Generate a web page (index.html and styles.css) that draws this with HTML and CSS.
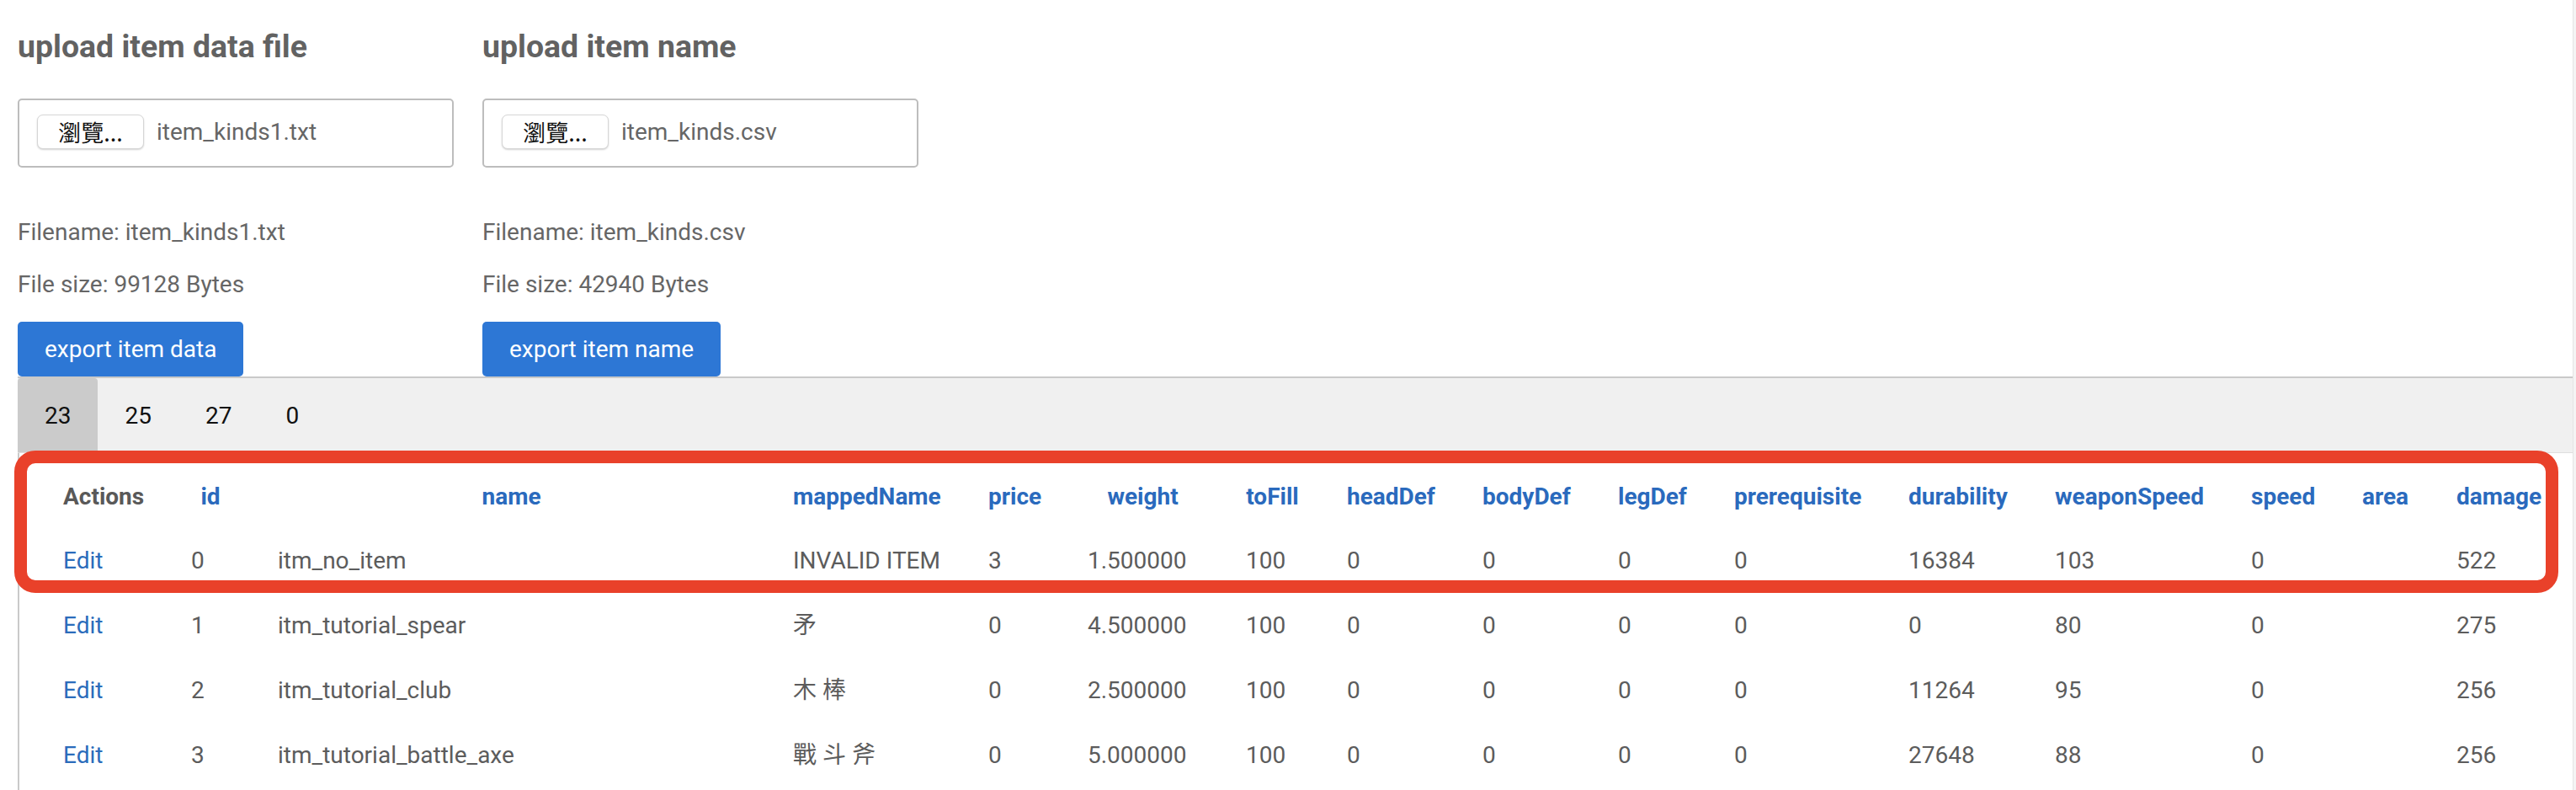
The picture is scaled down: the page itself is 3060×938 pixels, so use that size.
FILE: index.html
```html
<!DOCTYPE html>
<html lang="en">
<head>
<meta charset="utf-8">
<title>Item editor</title>
<link rel="stylesheet" href="styles.css">
</head>
<body>
<div class="page">
  <div class="uploads">
    <section class="upload">
      <h3 class="upload-title">upload item data file</h3>
      <div class="file-box"><span class="file-btn">瀏覽...</span><span class="file-name">item_kinds1.txt</span></div>
      <p class="meta meta-first">Filename: item_kinds1.txt</p>
      <p class="meta">File size: 99128 Bytes</p>
      <button class="export" type="button">export item data</button>
    </section>
    <section class="upload">
      <h3 class="upload-title">upload item name</h3>
      <div class="file-box"><span class="file-btn">瀏覽...</span><span class="file-name">item_kinds.csv</span></div>
      <p class="meta meta-first">Filename: item_kinds.csv</p>
      <p class="meta">File size: 42940 Bytes</p>
      <button class="export" type="button">export item name</button>
    </section>
  </div>
  <div class="tabbar">
    <span class="tab tab-active">23</span>
    <span class="tab">25</span>
    <span class="tab">27</span>
    <span class="tab">0</span>
  </div>
  <div class="panel">
    <table class="items">
      <thead>
        <tr>
          <th class="c-actions th-plain">Actions</th>
          <th class="c-id">id</th>
          <th class="c-name">name</th>
          <th class="c-mapped">mappedName</th>
          <th class="c-price">price</th>
          <th class="c-weight">weight</th>
          <th class="c-tofill">toFill</th>
          <th class="c-head">headDef</th>
          <th class="c-body">bodyDef</th>
          <th class="c-leg">legDef</th>
          <th class="c-prereq">prerequisite</th>
          <th class="c-dur">durability</th>
          <th class="c-wspeed">weaponSpeed</th>
          <th class="c-speed">speed</th>
          <th class="c-area">area</th>
          <th class="c-damage">damage</th>
        </tr>
      </thead>
      <tbody>
        <tr>
          <td><a class="edit" href="#">Edit</a></td><td>0</td><td>itm_no_item</td><td>INVALID ITEM</td><td>3</td><td>1.500000</td><td>100</td><td>0</td><td>0</td><td>0</td><td>0</td><td>16384</td><td>103</td><td>0</td><td></td><td>522</td>
        </tr>
        <tr>
          <td><a class="edit" href="#">Edit</a></td><td>1</td><td>itm_tutorial_spear</td><td>矛</td><td>0</td><td>4.500000</td><td>100</td><td>0</td><td>0</td><td>0</td><td>0</td><td>0</td><td>80</td><td>0</td><td></td><td>275</td>
        </tr>
        <tr>
          <td><a class="edit" href="#">Edit</a></td><td>2</td><td>itm_tutorial_club</td><td>木 棒</td><td>0</td><td>2.500000</td><td>100</td><td>0</td><td>0</td><td>0</td><td>0</td><td>11264</td><td>95</td><td>0</td><td></td><td>256</td>
        </tr>
        <tr>
          <td><a class="edit" href="#">Edit</a></td><td>3</td><td>itm_tutorial_battle_axe</td><td>戰 斗 斧</td><td>0</td><td>5.000000</td><td>100</td><td>0</td><td>0</td><td>0</td><td>0</td><td>27648</td><td>88</td><td>0</td><td></td><td>256</td>
        </tr>
      </tbody>
    </table>
  </div>
  <div class="highlight"></div>
</div>
</body>
</html>
```

FILE: styles.css
```css
html {
  background: #f4f4f4;
  overflow: hidden;
}

body {
  margin: 0;
  font-family: Roboto, "Noto Sans CJK TC", sans-serif;
  color: #5f5f5f;
}

.page {
  position: relative;
  width: 3057px;
  min-height: 938px;
  box-sizing: border-box;
  padding-left: 21px;
  background: #fff;
  border-right: 1px solid #e4e4e4;
}

.uploads {
  display: flex;
  gap: 34px;
}

.upload {
  width: 518px;
  display: flex;
  flex-direction: column;
  align-items: flex-start;
}

.upload-title {
  margin: 33px 0 0;
  font-size: 37.44px;
  line-height: 44px;
  font-weight: 700;
  color: #626262;
}

.file-box {
  margin-top: 40px;
  width: 518px;
  height: 82px;
  box-sizing: border-box;
  border: 2px solid #bdbdbd;
  border-radius: 5px;
  padding: 17px 20px 0 21px;
  display: flex;
  align-items: flex-start;
  gap: 15px;
}

.file-btn {
  width: 127px;
  height: 41px;
  box-sizing: border-box;
  border: 1px solid #d6d6d6;
  border-radius: 7px;
  background: #fff;
  box-shadow: 0 1px 2px rgba(0, 0, 0, 0.18);
  display: flex;
  align-items: center;
  justify-content: center;
  font-family: "Noto Sans CJK TC", sans-serif;
  font-size: 27px;
  color: #111;
  line-height: 1;
}

.file-name {
  font-size: 28px;
  line-height: 41px;
  color: #666;
}

.meta {
  margin: 29px 0 0;
  font-size: 28px;
  line-height: 33px;
  color: #666;
}

.meta-first {
  margin-top: 60px;
}

.export {
  margin-top: 28px;
  height: 65px;
  padding: 0 32px;
  border: none;
  border-radius: 5px;
  background: #2d77d5;
  color: #fff;
  font-family: Roboto, sans-serif;
  font-size: 28px;
  line-height: 65px;
  cursor: pointer;
}

.tabbar {
  display: flex;
  background: #f0f0f0;
  border-top: 2px solid #c9c9c9;
  border-bottom: 1px solid #dedede;
}

.tab {
  padding: 27.5px 32px;
  font-size: 28px;
  line-height: 33px;
  color: #111;
}

.tab-active {
  background: #cbcbcb;
  border-radius: 4px 4px 0 0;
}

.panel {
  border-left: 2px solid #c9c9c9;
  padding: 13px 0 0 23px;
  min-height: 500px;
  overflow: hidden;
}

.items {
  table-layout: fixed;
  width: 3001px;
  border-collapse: separate;
  border-spacing: 1px 0;
  font-size: 28px;
}

.items th,
.items td {
  padding: 0 28px;
  line-height: 33px;
  white-space: nowrap;
  vertical-align: middle;
}

.items th {
  height: 76px;
  text-align: center;
  font-weight: 700;
  color: #2a6abd;
}

.items td {
  height: 77px;
  text-align: left;
  color: #5c5c5c;
}

.items th.th-plain {
  color: #595959;
}

.edit {
  color: #2b6cbb;
  text-decoration: none;
}

.c-actions { width: 95px; }
.c-id { width: 46px; }
.c-name { width: 555px; }
.c-mapped { width: 175px; }
.c-price { width: 61px; }
.c-weight { width: 131px; }
.c-tofill { width: 63px; }
.c-head { width: 104px; }
.c-body { width: 104px; }
.c-leg { width: 81px; }
.c-prereq { width: 150px; }
.c-dur { width: 117px; }
.c-wspeed { width: 176px; }
.c-speed { width: 75px; }
.c-area { width: 55px; }
.c-damage { width: 100px; }

.highlight {
  position: absolute;
  left: 17px;
  top: 535px;
  width: 3022px;
  height: 169px;
  box-sizing: border-box;
  border: 15px solid #e9412a;
  border-radius: 25px;
  pointer-events: none;
}
```
